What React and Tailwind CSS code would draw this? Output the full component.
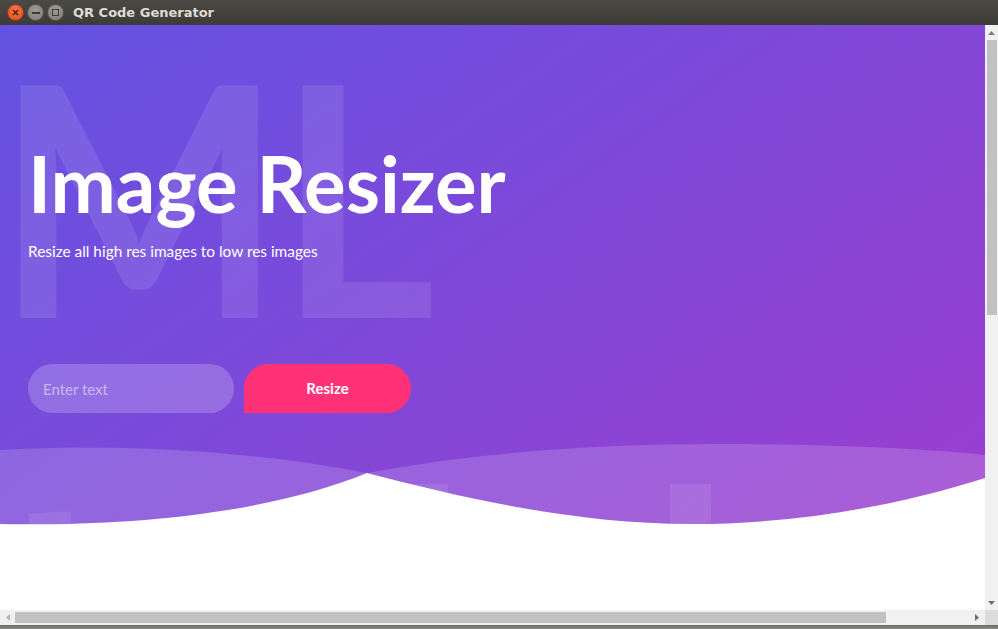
function TitleBar() {
  return (
    <div className="flex h-[25px] shrink-0 items-center bg-[linear-gradient(#4a4944,#3c3b37)]">
      <div className="ml-[7px] flex items-center gap-[3px]">
        <span className="flex h-[17px] w-[17px] items-center justify-center rounded-full border border-[#9c3613] bg-[radial-gradient(circle_at_50%_35%,#f7784a,#df4b1c)]">
          <svg width="7" height="7" viewBox="0 0 7 7">
            <path d="M1,1 L6,6 M6,1 L1,6" stroke="#4a1a08" strokeWidth="1.4" />
          </svg>
        </span>
        <span className="flex h-[17px] w-[17px] items-center justify-center rounded-full border border-[#55544f] bg-[radial-gradient(circle_at_50%_35%,#9d9c96,#7c7b76)]">
          <span className="h-[2px] w-[8px] bg-[#3b3a36]" />
        </span>
        <span className="flex h-[17px] w-[17px] items-center justify-center rounded-full border border-[#55544f] bg-[radial-gradient(circle_at_50%_35%,#9d9c96,#7c7b76)]">
          <span className="h-[7px] w-[7px] border-[1.5px] border-[#3b3a36]" />
        </span>
      </div>
      <span className="ml-[9px] font-['DejaVu_Sans',sans-serif] text-[13px] font-bold text-[#dfdbd2]">
        QR Code Generator
      </span>
    </div>
  );
}

function Arrow({ dir, color }) {
  const pts = {
    up: "0,4 7,4 3.5,0",
    down: "0,0 7,0 3.5,4",
    left: "4,0 4,7 0,3.5",
    right: "0,0 0,7 4,3.5",
  }[dir];
  const w = dir === "up" || dir === "down" ? 7 : 4;
  const h = dir === "up" || dir === "down" ? 4 : 7;
  return (
    <svg width={w} height={h} viewBox={`0 0 ${w} ${h}`}>
      <polygon points={pts} fill={color} />
    </svg>
  );
}

function VScroll() {
  return (
    <div className="flex w-[13px] flex-col bg-[#f1f1f1]">
      <div className="flex h-[15px] items-center justify-center pt-[1px]">
        <Arrow dir="up" color="#7d7d7d" />
      </div>
      <div className="ml-[2px] h-[275px] w-[10px] bg-[#c1c1c1]" />
      <div className="flex-1" />
      <div className="flex h-[15px] items-center justify-center">
        <Arrow dir="down" color="#6e6e6e" />
      </div>
    </div>
  );
}

function HScroll() {
  return (
    <div className="flex h-[15px] shrink-0">
      <div className="flex w-[985px] items-center bg-[#f1f1f1]">
        <div className="flex w-[15px] justify-center">
          <Arrow dir="left" color="#b5b5b5" />
        </div>
        <div className="h-[11px] w-[871px] bg-[#c1c1c1]" />
        <div className="flex flex-1 justify-end pr-[6px]">
          <Arrow dir="right" color="#6e6e6e" />
        </div>
      </div>
      <div className="w-[13px] bg-[#dcdcdc]" />
    </div>
  );
}

function Waves() {
  return (
    <svg className="absolute bottom-0 left-0" width="985" height="90" viewBox="0 440 985 90">
      <path d="M0,450 C110,443 250,450 367,473 L367,530 L0,530 Z" fill="#fff" fillOpacity="0.16" />
      <path
        d="M367,473 C480,452 600,444 713,444 C830,444 930,449 985,455 L985,530 L367,530 Z"
        fill="#fff"
        fillOpacity="0.16"
      />
      <path d="M29,514 L71,511 L71,530 L29,530 Z" fill="#fff" fillOpacity="0.09" />
      <rect x="407" y="484" width="41" height="46" fill="#fff" fillOpacity="0.09" />
      <rect x="670" y="484" width="41" height="46" fill="#fff" fillOpacity="0.09" />
      <path
        d="M0,524 C100,526 250,520 367,473 C470,500 580,524 690,524 C800,524 900,505 985,478 L985,531 L0,531 Z"
        fill="#fff"
      />
    </svg>
  );
}

function Hero() {
  return (
    <section className="relative h-[505px] overflow-hidden bg-[linear-gradient(145deg,#6352e2_0%,#9c3ecf_100%)]">
      <div className="absolute left-[-4px] top-[8px] origin-left scale-x-[0.94] select-none text-[322px] font-bold leading-none tracking-[-4px] text-white/10">
        ML
      </div>
      <div className="relative pl-[28px] pt-[119px]">
        <h1 className="text-[78px] font-bold leading-none text-white">Image Resizer</h1>
        <p className="mt-[17px] text-[15.4px] leading-[24px] text-white">
          Resize all high res images to low res images
        </p>
        <div className="mt-[101px] flex gap-[10px]">
          <input
            type="text"
            placeholder="Enter text"
            className="h-[49px] w-[206px] rounded-full bg-white/20 px-[15px] text-[15px] text-white outline-none placeholder:text-white/50"
          />
          <button className="h-[49px] w-[167px] rounded-tl-[25px] rounded-r-[25px] bg-[#ff3278] text-[15px] font-bold text-white">
            Resize
          </button>
        </div>
      </div>
      <Waves />
    </section>
  );
}

export default function App() {
  return (
    <div className="flex h-[629px] w-[998px] flex-col overflow-hidden bg-white font-['Lato',sans-serif]">
      <TitleBar />
      <div className="flex min-h-0 flex-1">
        <main className="relative w-[985px] overflow-hidden bg-white">
          <Hero />
        </main>
        <VScroll />
      </div>
      <HScroll />
      <div className="h-[4px] shrink-0 bg-[linear-gradient(#6a6a68,#8a8a88)]" />
    </div>
  );
}
